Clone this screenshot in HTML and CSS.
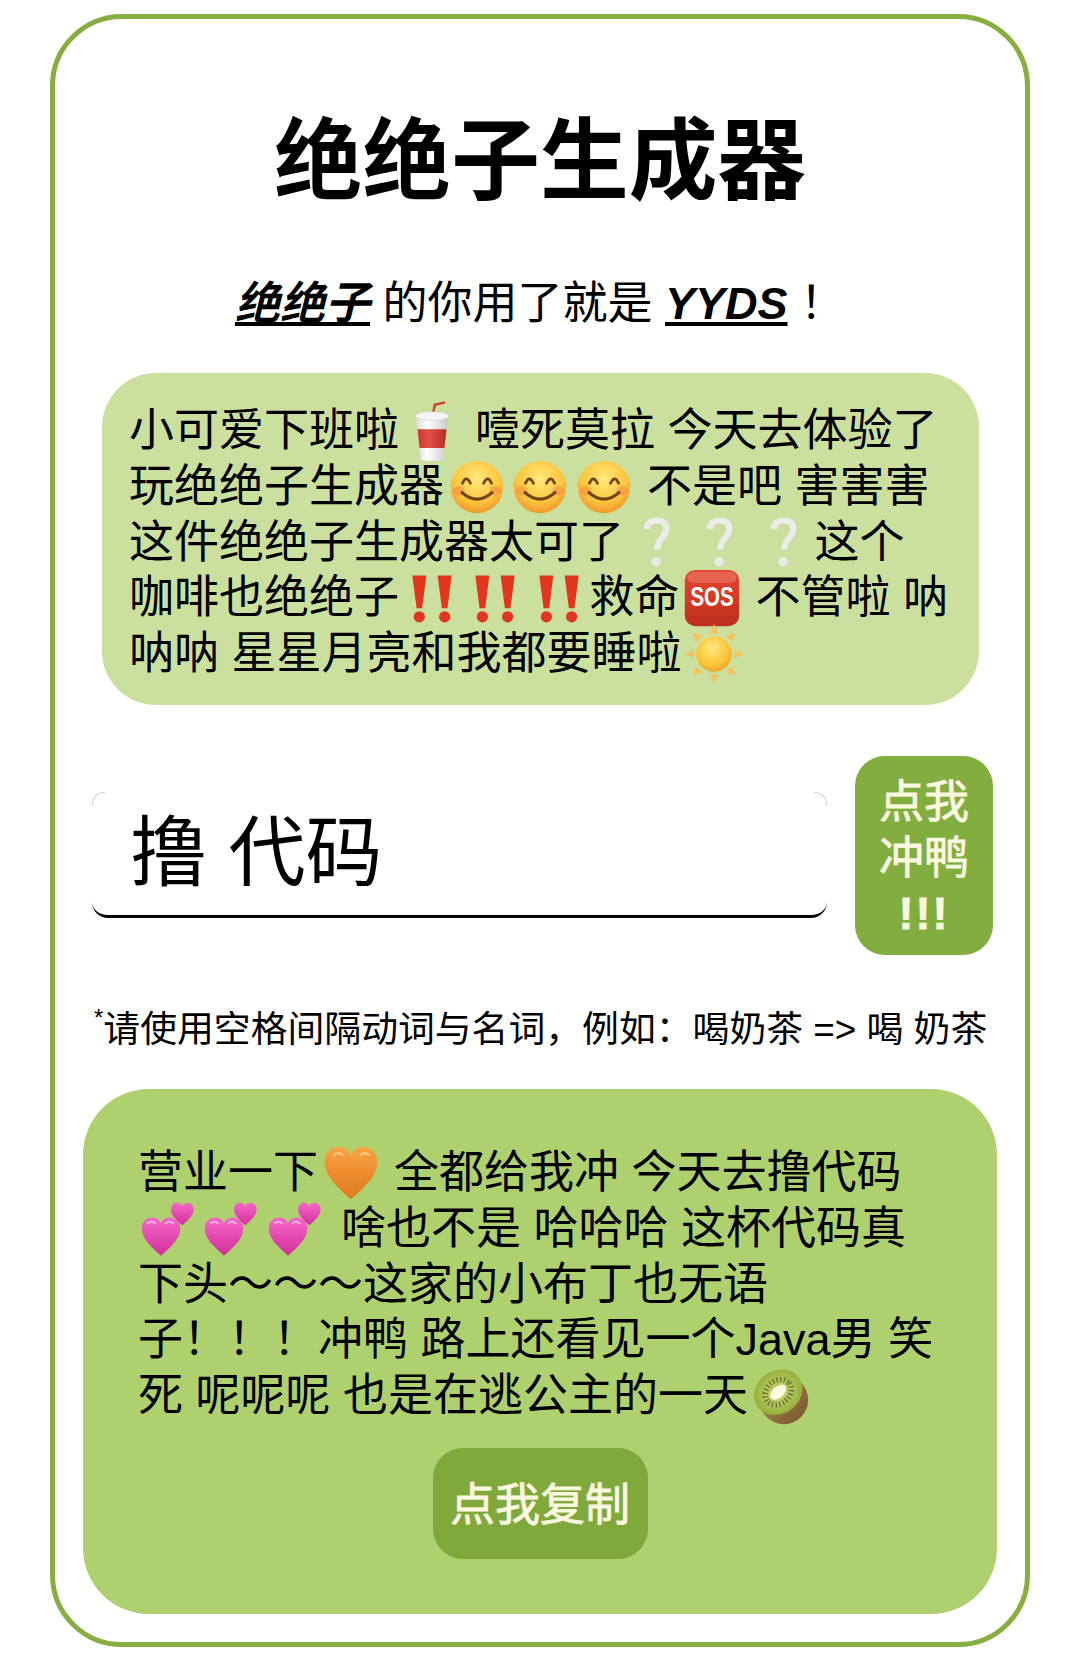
FILE: index.html
```html
<!DOCTYPE html>
<html lang="zh-CN">
<head>
<meta charset="utf-8">
<title>绝绝子生成器</title>
<link rel="stylesheet" href="styles.css">
</head>
<body>
<svg class="defs" aria-hidden="true">
  <defs>
    <radialGradient id="gFace" cx="50%" cy="35%" r="65%">
      <stop offset="0" stop-color="#ffe97f"/><stop offset=".65" stop-color="#fdc73f"/><stop offset="1" stop-color="#ee9a2a"/>
    </radialGradient>
    <radialGradient id="gSun" cx="45%" cy="35%" r="65%">
      <stop offset="0" stop-color="#ffe884"/><stop offset=".7" stop-color="#fcc636"/><stop offset="1" stop-color="#eda52a"/>
    </radialGradient>
    <linearGradient id="gCup" x1="0" x2="1" y1="0" y2="0">
      <stop offset="0" stop-color="#d9d9d9"/><stop offset=".35" stop-color="#ffffff"/><stop offset="1" stop-color="#c9c9c9"/>
    </linearGradient>
    <linearGradient id="gBand" x1="0" x2="1" y1="0" y2="0">
      <stop offset="0" stop-color="#c9352f"/><stop offset=".4" stop-color="#e25048"/><stop offset="1" stop-color="#b92c28"/>
    </linearGradient>
    <linearGradient id="gSos" x1="0" x2="0" y1="0" y2="1">
      <stop offset="0" stop-color="#e8452f"/><stop offset="1" stop-color="#bc2f1e"/>
    </linearGradient>
    <linearGradient id="gOrange" x1="0" x2="0" y1="0" y2="1">
      <stop offset="0" stop-color="#f7a544"/><stop offset=".5" stop-color="#ee8c2e"/><stop offset="1" stop-color="#dd7a20"/>
    </linearGradient>
    <linearGradient id="gPink" x1="0" x2="0" y1="0" y2="1">
      <stop offset="0" stop-color="#f667c9"/><stop offset="1" stop-color="#d12f9a"/>
    </linearGradient>
    <linearGradient id="gShell" x1="0" x2="1" y1="0" y2="1">
      <stop offset="0" stop-color="#b8965c"/><stop offset="1" stop-color="#74512c"/>
    </linearGradient>
    <radialGradient id="gFlesh" cx="50%" cy="50%" r="55%">
      <stop offset="0" stop-color="#d5dc7c"/><stop offset="1" stop-color="#8fab35"/>
    </radialGradient>
    <path id="heart" d="M32 60C11 42 4 32 4 20 4 10 11 4 19 4c6 0 11 3 13 9 2-6 7-9 13-9 8 0 15 6 15 16 0 12-7 22-28 40z"/>
    <symbol id="e-cup" viewBox="0 0 64 64">
      <path d="M33 14 35 4 46 1.500" fill="none" stroke="#c9423c" stroke-width="2.600"/>
      <path d="M15 18h34l-5 45q-12 2-24 0z" fill="url(#gCup)"/>
      <path d="M16.500 30h31l-2.200 20H18.700z" fill="url(#gBand)"/>
      <ellipse cx="32" cy="16" rx="18" ry="4.500" fill="#f4f4f4" stroke="#cfcfcf" stroke-width=".6"/>
    </symbol>
    <symbol id="e-smile" viewBox="0 0 64 64">
      <circle cx="32" cy="32" r="28" fill="url(#gFace)"/>
      <ellipse cx="12.500" cy="36" rx="6.500" ry="5" fill="#f08a45" opacity=".55"/>
      <ellipse cx="51.500" cy="36" rx="6.500" ry="5" fill="#f08a45" opacity=".55"/>
      <path d="M16.500 28q4-9.500 8.500 0M39 28q4.500-9.500 8.500 0" fill="none" stroke="#6e4617" stroke-width="3" stroke-linecap="round"/>
      <path d="M16 38q16 14 32 0" fill="none" stroke="#6e4617" stroke-width="3.400" stroke-linecap="round"/>
    </symbol>
    <symbol id="e-question" viewBox="0 0 64 64">
      <path d="M21 17q1-9 11-9 10 0 10 9c0 8-9 10-10 22" fill="none" stroke="#ececec" stroke-width="6.500"/>
      <circle cx="31" cy="52" r="5" fill="#e9e9e9"/>
    </symbol>
    <symbol id="e-bangs" viewBox="0 0 64 64">
      <path d="M11 8h15l-4.500 35h-6zM38 8h15l-4.500 35h-6z" fill="#e2361f"/>
      <circle cx="18.500" cy="52" r="6" fill="#e2361f"/>
      <circle cx="45.500" cy="52" r="6" fill="#e2361f"/>
    </symbol>
    <symbol id="e-sos" viewBox="0 0 64 64">
      <rect x="3" y="2" width="58" height="60" rx="11" fill="url(#gSos)"/>
      <rect x="6" y="4" width="52" height="12" rx="6" fill="#ffffff" opacity=".18"/>
      <text x="32" y="41" class="sos-text" text-anchor="middle" textLength="46" lengthAdjust="spacingAndGlyphs">SOS</text>
    </symbol>
    <symbol id="e-sun" viewBox="0 0 64 64">
      <g fill="#f3c45c">
        <path d="M32 0l4.500 10h-9zM32 64l-4.500-10h9zM0 32l10-4.500v9zM64 32l-10 4.500v-9z"/>
        <path d="M9 9l10.500 3.500-7 7zM55 9l-3.500 10.500-7-7zM9 55l3.500-10.500 7 7zM55 55l-10.500-3.500 7-7z"/>
      </g>
      <circle cx="32" cy="32" r="19" fill="url(#gSun)"/>
    </symbol>
    <symbol id="e-orange" viewBox="0 0 64 64">
      <use href="#heart" fill="url(#gOrange)"/>
      <path d="M14 13q5-4 9 0M42 13q5-4 9 0" fill="none" stroke="#fcd49a" stroke-width="2.500" stroke-linecap="round" opacity=".7"/>
    </symbol>
    <symbol id="e-hearts" viewBox="0 0 64 64">
      <use href="#heart" fill="url(#gPink)" transform="translate(-2 16.700) scale(.73)"/>
      <use href="#heart" fill="url(#gPink)" transform="translate(30.300 2.300) scale(.43)"/>
      <path d="M7 26q4-3.500 8 0M26 26q4-3.500 8 0" fill="none" stroke="#fbb6e6" stroke-width="2" stroke-linecap="round"/>
    </symbol>
    <symbol id="e-kiwi" viewBox="0 0 64 64">
      <circle cx="35" cy="36" r="26" fill="url(#gShell)"/>
      <ellipse cx="29" cy="28" rx="27" ry="23" transform="rotate(-35 29 28)" fill="url(#gFlesh)"/>
      <ellipse cx="29" cy="28" rx="15" ry="12" transform="rotate(-40 29 28)" fill="none" stroke="#5d6a30" stroke-width="6" stroke-dasharray="1.300 2.600"/>
      <ellipse cx="29" cy="28" rx="10" ry="6" transform="rotate(-40 29 28)" fill="#fdfbe2"/>
    </symbol>
  </defs>
</svg>

<main class="card">
  <h1 class="title">绝绝子生成器</h1>
  <p class="subtitle"><a class="mark">绝绝子</a> 的你用了就是 <a class="mark">YYDS</a> ！</p>

  <p class="bubble sample">小可爱下班啦<span class="emoji"><svg><use href="#e-cup"/></svg></span> 噎死莫拉 今天去体验了玩绝绝子生成器<span class="emoji"><svg><use href="#e-smile"/></svg></span><span class="emoji"><svg><use href="#e-smile"/></svg></span><span class="emoji"><svg><use href="#e-smile"/></svg></span> 不是吧 害害害这件绝绝子生成器太可了<span class="emoji"><svg><use href="#e-question"/></svg></span><span class="emoji"><svg><use href="#e-question"/></svg></span><span class="emoji"><svg><use href="#e-question"/></svg></span>这个咖啡也绝绝子<span class="emoji"><svg><use href="#e-bangs"/></svg></span><span class="emoji"><svg><use href="#e-bangs"/></svg></span><span class="emoji"><svg><use href="#e-bangs"/></svg></span>救命<span class="emoji"><svg><use href="#e-sos"/></svg></span> 不管啦 呐呐呐 星星月亮和我都要睡啦<span class="emoji"><svg><use href="#e-sun"/></svg></span></p>

  <div class="controls">
    <div class="field"><input class="field-input" type="text" value="撸 代码"></div>
    <button class="btn go" type="button">点我冲鸭<br><b class="bang">!!!</b></button>
  </div>

  <p class="note"><sup class="star">*</sup>请使用空格间隔动词与名词，例如：喝奶茶 =&gt; 喝 奶茶</p>

  <section class="bubble result">
    <p class="result-text">营业一下<span class="emoji"><svg><use href="#e-orange"/></svg></span> 全都给我冲 今天去撸代码<span class="emoji"><svg><use href="#e-hearts"/></svg></span><span class="emoji"><svg><use href="#e-hearts"/></svg></span><span class="emoji"><svg><use href="#e-hearts"/></svg></span> 啥也不是 哈哈哈 这杯代码真下头～～～这家的小布丁也无语子！！！冲鸭 路上还看见一个Java男 笑死 呢呢呢 也是在逃公主的一天<span class="emoji"><svg><use href="#e-kiwi"/></svg></span></p>
    <button class="btn copy" type="button">点我复制</button>
  </section>
</main>
</body>
</html>
```

FILE: styles.css
```css
* { box-sizing: border-box; }

html, body { margin: 0; background: #fff; }

body {
  padding: 14px 50px 15px 50px;
  color: #000;
  font-family: "Liberation Sans", "Noto Sans CJK SC", sans-serif;
}

.defs { width: 0; height: 0; display: block; }

.sos-text {
  font-family: "Liberation Sans", sans-serif;
  font-weight: 700;
  font-size: 30px;
  fill: #fff;
}

.card {
  border: 5px solid #86ae40;
  border-radius: 72px;
  padding: 93px 28px 28px 28px;
  background: #fff;
}

.title {
  margin: 0;
  font-size: 88.700px;
  line-height: 100px;
  font-weight: 700;
  text-align: center;
}

.subtitle {
  margin: 64px 0 41px;
  font-size: 45px;
  line-height: 56px;
  text-align: center;
}

.mark {
  font-style: italic;
  font-weight: 700;
  text-decoration: underline;
}

.bubble {
  font-size: 45px;
  line-height: 55.800px;
}

.sample {
  margin: 0 18px 51px 19px;
  padding: 30px 30px 23px 27px;
  background: #cbe09e;
  border-radius: 54px;
}

.emoji {
  display: inline-flex;
  align-items: center;
  justify-content: center;
  width: 63.500px;
  height: 55.800px;
  padding-left: 2px;
  vertical-align: top;
}

.emoji svg {
  flex: none;
  width: 60px;
  height: 60px;
  overflow: visible;
}

.controls {
  display: flex;
  align-items: center;
  gap: 28px;
  margin: 0 4px 52px 9px;
}

.field {
  position: relative;
  flex: 1;
}

.field::before,
.field::after {
  content: "";
  position: absolute;
  top: 0;
  width: 12px;
  height: 12px;
  border-top: 1px solid #cfcfcf;
}

.field::before {
  left: 0;
  border-left: 1px solid #cfcfcf;
  border-top-left-radius: 12px;
}

.field::after {
  right: 0;
  border-right: 1px solid #cfcfcf;
  border-top-right-radius: 12px;
}

.field-input {
  display: block;
  width: 100%;
  height: 126px;
  padding: 0 30px 14px 38px;
  border: 0;
  border-bottom: 3px solid #000;
  border-radius: 16px;
  outline: 0;
  background: #fff;
  color: #000;
  font-family: "Liberation Sans", "Noto Sans CJK SC", sans-serif;
  font-size: 77px;
}

.btn {
  border: 0;
  font-family: "Liberation Sans", "Noto Sans CJK SC", sans-serif;
  color: #fbf8e0;
  font-size: 45px;
  line-height: 55.800px;
  font-weight: 400;
  -webkit-text-stroke: .8px #fbf8e0;
}

.go {
  flex: none;
  width: 138px;
  height: 199px;
  padding: 6px 20px 0;
  border-radius: 30px;
  background: #82ad3f;
}

.bang { font-weight: 700; letter-spacing: 2px; }

.note {
  margin: 0 0 36px 11px;
  font-size: 36.850px;
  line-height: 46px;
  white-space: nowrap;
}

.star {
  font-size: 24px;
  line-height: 0;
  vertical-align: 16px;
}

.result {
  display: flex;
  flex-direction: column;
  align-items: center;
  padding: 56px 60px 55px 55px;
  background: #aed06e;
  border-radius: 66px;
}

.result-text { margin: 0 0 24px; width: 100%; }

.copy {
  width: 215px;
  height: 111px;
  margin-left: 5px;
  padding: 4px 0 0;
  border-radius: 30px;
  background: #80a93c;
}
```
